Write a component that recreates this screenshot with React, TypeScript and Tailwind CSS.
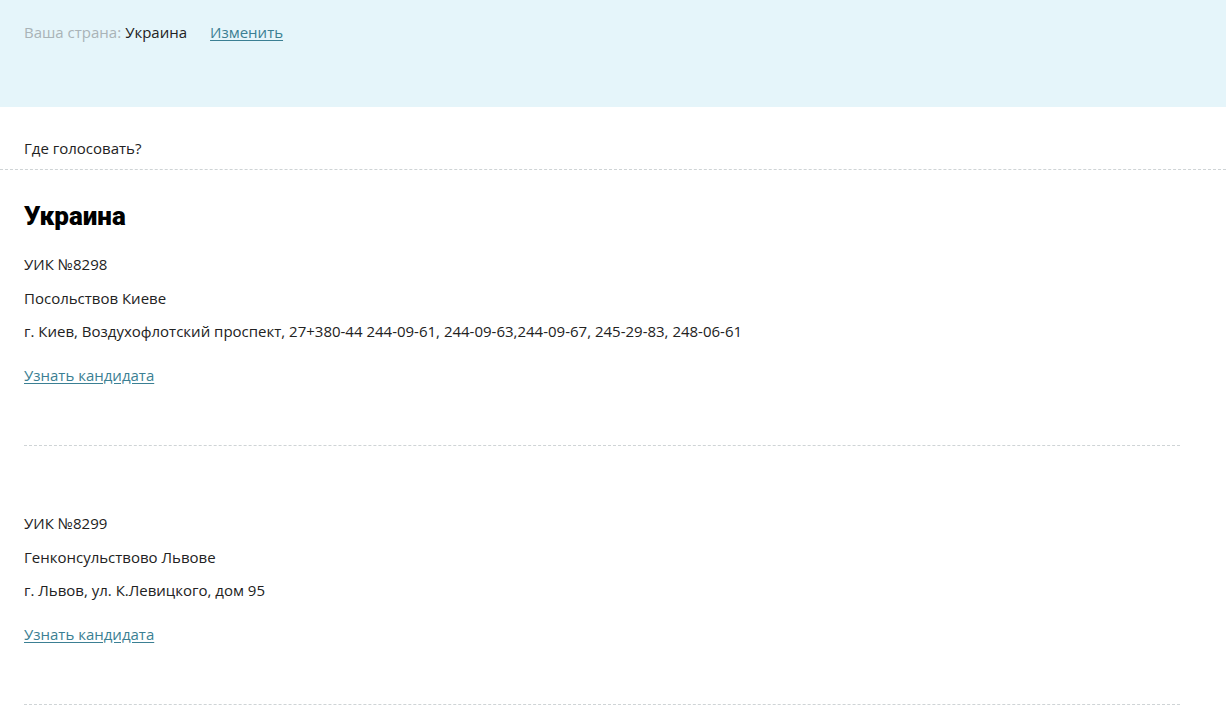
import React from "react";

const items = [
  {
    uik: "УИК №8298",
    name: "Посольствов Киеве",
    addr: "г. Киев, Воздухофлотский проспект, 27+380-44 244-09-61, 244-09-63,244-09-67, 245-29-83, 248-06-61",
  },
  {
    uik: "УИК №8299",
    name: "Генконсульствово Львове",
    addr: "г. Львов, ул. К.Левицкого, дом 95",
  },
];

export default function App() {
  return (
    <div className="min-h-[722px] bg-white text-[15px] leading-5 text-[#222]" style={{ fontFamily: '"Open Sans", "Noto Sans", sans-serif' }}>
      <div className="h-[107px] bg-[#e5f5fa] px-6 pt-[22px]">
        <div className="flex items-center">
          <span className="text-[#a9b3b7]">Ваша страна:</span>
          <span className="ml-1 text-[#222]">Украина</span>
          <a href="#" className="ml-[23px] text-[#3b7f93] underline underline-offset-2">Изменить</a>
        </div>
      </div>
      <div className="px-6 pt-[31px] pb-[11px]">Где голосовать?</div>
      <div className="border-t border-dashed border-[#cfd4d6]" />
      <div className="px-6 pr-[46px]">
        <h1 className="mt-[31px] text-[26px] leading-[30px] font-black text-black" style={{ fontFamily: 'Roboto, "Noto Sans", sans-serif' }}>Украина</h1>
        {items.map((it, i) => (
          <div key={i} className={i === 0 ? "pt-[23px]" : "pt-[67px]"}>
            <div>{it.uik}</div>
            <div className="mt-[14px]">{it.name}</div>
            <div className="mt-[13px]">{it.addr}</div>
            <a href="#" className="mt-[24px] inline-block text-[#3b7f93] underline underline-offset-2">Узнать кандидата</a>
            <div className="mt-[60px] border-t border-dashed border-[#cfd4d6]" />
          </div>
        ))}
      </div>
    </div>
  );
}
